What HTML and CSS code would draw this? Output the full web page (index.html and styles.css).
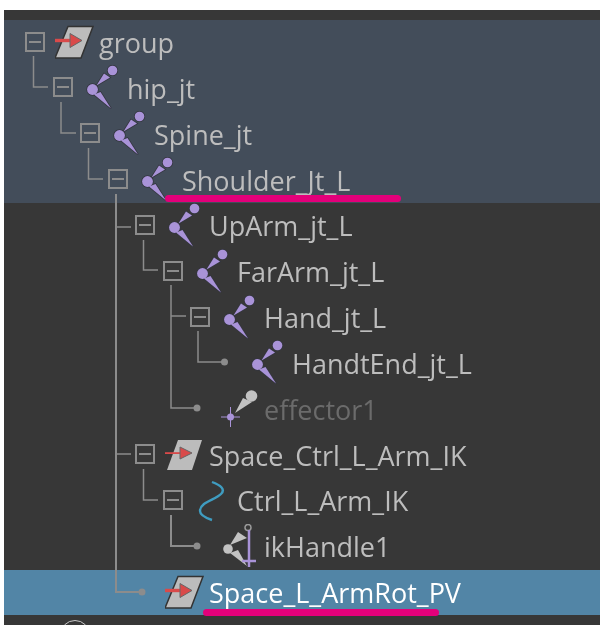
FILE: index.html
```html
<!DOCTYPE html>
<html lang="en">

<head>
  <meta charset="UTF-8">
  <link rel="stylesheet" href="styles.css">
  <title>Outliner</title>
</head>

<body>
  <svg class="defs" width="0" height="0">
    <symbol id="i-group" viewBox="0 0 44 46">
      <polygon points="13,6.5 38,6.5 26,38 0,38" fill="#bcbcbc" stroke="#333" stroke-width="1.5" />
      <rect x="0" y="18.8" width="17" height="3.4" fill="#d94a4a" />
      <polygon points="15,13.5 27,20.5 15,27.5" fill="#d94a4a" stroke="#666" stroke-width="1" />
    </symbol>
    <symbol id="i-space" viewBox="0 0 44 46">
      <polygon points="13,8 37,8 27,38 2,38" fill="#bcbcbc" />
      <rect x="0" y="20.2" width="17" height="1.8" fill="#d94a4a" />
      <polygon points="15,15 27,21 15,27" fill="#d94a4a" stroke="#666" stroke-width="1" />
    </symbol>
    <symbol id="i-joint" viewBox="0 0 44 46">
      <!-- dark halo first, same shapes again on top so the bones join the balls -->
      <g fill="#343640" stroke="#343640" stroke-width="1.6">
        <polygon points="13.5,20.5 21,8.5 27,12.5" />
        <polygon points="11,29.5 17.5,27 28,43.5" />
        <circle cx="29.5" cy="5.5" r="4.8" />
        <circle cx="9.5" cy="24.5" r="5.4" />
      </g>
      <g fill="#a993d8">
        <polygon points="13.5,20.5 21,8.5 27,12.5" />
        <polygon points="11,29.5 17.5,27 28,43.5" />
        <circle cx="29.5" cy="5.5" r="4.8" />
        <circle cx="9.5" cy="24.5" r="5.4" />
      </g>
    </symbol>
    <symbol id="i-effector" viewBox="0 0 44 46">
      <polygon points="15,27 23,12 32,16" fill="#c2c2c2" />
      <circle cx="31.5" cy="10" r="5.8" fill="#c2c2c2" />
      <path d="M10.5 21V41M1 31H20" stroke="#a993d8" stroke-width="1" />
      <circle cx="10.5" cy="31" r="3.5" fill="#a993d8" />
    </symbol>
    <symbol id="i-curve" viewBox="0 0 44 46">
      <path d="M19 4C27 7 33 11 28 16C22 22 7 24 7 33C7 37 13 40 19 42" fill="none" stroke="#3f9cc0" stroke-width="2.4" />
    </symbol>
    <symbol id="i-ik" viewBox="0 0 44 46">
      <polygon points="10,21 18,8 27,14" fill="#c2c2c2" />
      <polygon points="10,29 18,26 27,42" fill="#c2c2c2" />
      <circle cx="8" cy="25" r="4.8" fill="#c2c2c2" />
      <circle cx="28" cy="3.5" r="3" fill="none" stroke="#9a9a9a" stroke-width="1.5" />
      <path d="M29 6V43M22 37H36" stroke="#a993d8" stroke-width="2.5" />
    </symbol>
  </svg>

  <div class="outliner">
    <div class="tree">
      <div class="row hilite d0"><span class="box"></span><svg class="icon"><use href="#i-group" /></svg><span class="label">group</span></div>
      <div class="row hilite d1"><span class="box"></span><svg class="icon"><use href="#i-joint" /></svg><span class="label">hip_jt</span></div>
      <div class="row hilite d2"><span class="box"></span><svg class="icon"><use href="#i-joint" /></svg><span class="label">Spine_jt</span></div>
      <div class="row hilite d3"><span class="box"></span><svg class="icon"><use href="#i-joint" /></svg><span class="label">Shoulder_Jt_L</span></div>
      <div class="row d4"><span class="box"></span><svg class="icon"><use href="#i-joint" /></svg><span class="label">UpArm_jt_L</span></div>
      <div class="row d5"><span class="box"></span><svg class="icon"><use href="#i-joint" /></svg><span class="label">FarArm_jt_L</span></div>
      <div class="row d6"><span class="box"></span><svg class="icon"><use href="#i-joint" /></svg><span class="label">Hand_jt_L</span></div>
      <div class="row d7"><span class="leaf"></span><svg class="icon"><use href="#i-joint" /></svg><span class="label">HandtEnd_jt_L</span></div>
      <div class="row d6 muted"><span class="leaf"></span><svg class="icon"><use href="#i-effector" /></svg><span class="label">effector1</span></div>
      <div class="row d4"><span class="box"></span><svg class="icon"><use href="#i-space" /></svg><span class="label">Space_Ctrl_L_Arm_IK</span></div>
      <div class="row d5"><span class="box"></span><svg class="icon"><use href="#i-curve" /></svg><span class="label">Ctrl_L_Arm_IK</span></div>
      <div class="row d6"><span class="leaf"></span><svg class="icon"><use href="#i-ik" /></svg><span class="label">ikHandle1</span></div>
      <div class="row d4 selected"><span class="leaf"></span><svg class="icon"><use href="#i-group" /></svg><span class="label">Space_L_ArmRot_PV</span></div>
    </div>

    <!-- connector lines, coordinates are page pixels -->
    <svg class="wires" viewBox="4 10 596 615">
      <g fill="none" stroke="#8c8c8c" stroke-width="1.5">
        <path d="M33.5 56V87H48" />
        <path d="M61 102V133H76" />
        <path d="M88.5 148V179H103" />
        <path d="M116 194V592H142" stroke-width="2" />
        <path d="M116 227H131M116 454H131" />
        <path d="M143.5 240V270H158" />
        <path d="M171 285V408H197M171 316H186" />
        <path d="M198 331V362H224" />
        <path d="M143.5 469V500H158" />
        <path d="M171 515V546H197" stroke-width="2" />
      </g>
      <g fill="#8c8c8c">
        <circle cx="224.5" cy="362" r="3.5" />
        <circle cx="197" cy="408" r="3.5" />
        <circle cx="197" cy="546" r="3.5" />
        <circle cx="142" cy="592" r="3.5" />
      </g>
    </svg>

    <div class="mark mark-shoulder"></div>
    <div class="mark mark-pv"></div>
    <div class="arc"></div>
  </div>
</body>

</html>
```

FILE: styles.css
```css
body {
  margin: 0;
  background: #fff;
  height: 633px;
  overflow: hidden;
}

.defs {
  position: absolute;
}

.outliner {
  position: relative;
  width: 596px;
  height: 615px;
  margin: 10px 0 0 4px;
  padding-top: 9.7px;
  box-sizing: border-box;
  background: #373737;
  overflow: hidden;
}

.row {
  display: flex;
  align-items: center;
  height: 45.83px;
  font-family: "Open Sans", sans-serif;
  font-size: 27px;
  color: #bdbdbd;
  white-space: nowrap;
}

.label {
  filter: blur(0.35px);
}

.hilite {
  background: #434d5a;
}

.selected {
  background: #5285a6;
  color: #fff;
}

.muted {
  color: #6b6b6b;
}

.d0 { padding-left: 21px; }
.d1 { padding-left: 49px; }
.d2 { padding-left: 76px; }
.d3 { padding-left: 104px; }
.d4 { padding-left: 131px; }
.d5 { padding-left: 159px; }
.d6 { padding-left: 186px; }
.d7 { padding-left: 214px; }

.box,
.leaf {
  flex: none;
  width: 20px;
  height: 20px;
  margin-right: 10px;
  box-sizing: border-box;
}

.box {
  border: 2px solid #8c8c8c;
  background: linear-gradient(#8c8c8c, #8c8c8c) center / 12px 2px no-repeat;
  margin-bottom: 2px;
}

.icon {
  flex: none;
  width: 44px;
  height: 46px;
  overflow: visible;
}

.wires {
  position: absolute;
  left: 0;
  top: 0;
  width: 596px;
  height: 615px;
}

.mark {
  position: absolute;
  height: 7px;
  background: #e3007a;
  border-radius: 4px;
}

.mark-shoulder {
  left: 161px;
  top: 185px;
  width: 236px;
}

.mark-pv {
  left: 199px;
  top: 599px;
  width: 236px;
}

.arc {
  position: absolute;
  left: 56px;
  top: 610px;
  width: 28px;
  height: 28px;
  border: 1.5px solid #c8c8c8;
  border-radius: 50%;
}
```
